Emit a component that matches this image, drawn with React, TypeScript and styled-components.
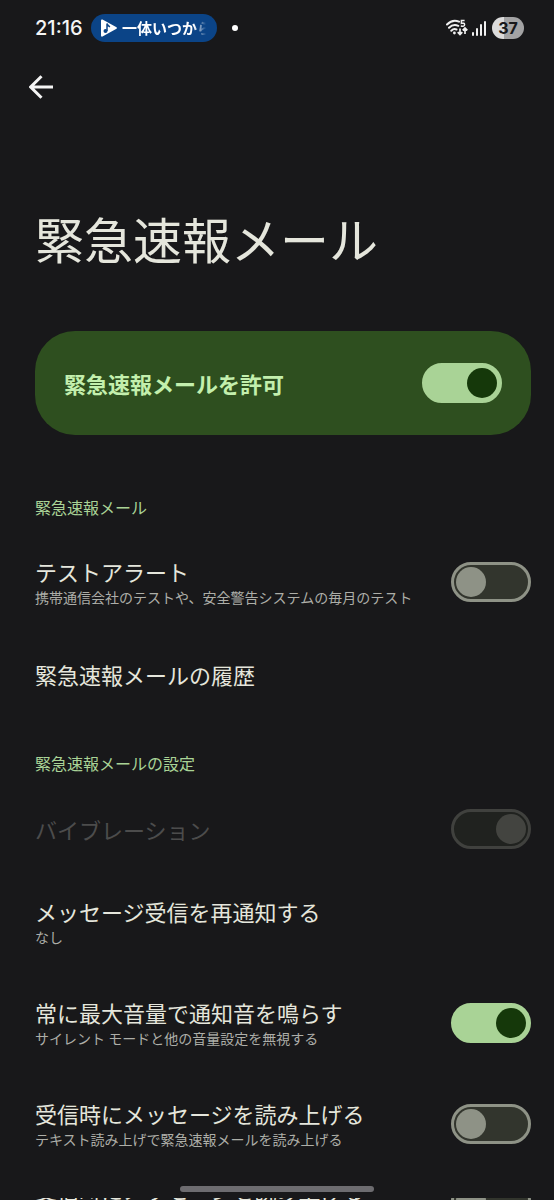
import React, { useState } from 'react';
import styled, { createGlobalStyle, css } from 'styled-components';

const GlobalStyle = createGlobalStyle`
  * { box-sizing: border-box; }
  html, body { height: 100%; }
  body {
    margin: 0;
    background: #18181a;
    color: #e5e6dc;
    font-family: "Noto Sans CJK JP", sans-serif;
    overflow: hidden;
  }
  #root { height: 100%; }
`;

const Screen = styled.div`
  height: 100%;
  overflow: hidden;
  background: #18181a;
`;

const StatusBar = styled.header`
  display: flex;
  align-items: center;
  height: 56px;
  padding: 0 30px 0 35px;
`;

const Clock = styled.time`
  width: 56px;
  font: 500 20px/28px Inter, Roboto, sans-serif;
  color: #f4f4f4;
`;

const MediaChip = styled.button`
  display: flex;
  align-items: center;
  gap: 4px;
  width: 126px;
  height: 28px;
  padding: 0 10px 0 9px;
  border: 0;
  border-radius: 14px;
  background: #0b4487;
  color: #fff;
`;

const ChipText = styled.span`
  flex: 1;
  overflow: hidden;
  white-space: nowrap;
  text-align: left;
  font: 700 15px/22px "Noto Sans CJK JP", sans-serif;
  mask-image: linear-gradient(to right, #000 72px, transparent 84px);
`;

const Dot = styled.span`
  width: 6px;
  height: 6px;
  margin-left: 15px;
  border-radius: 50%;
  background: #fff;
`;

const StatusIcons = styled.div`
  display: flex;
  align-items: center;
  gap: 4px;
  margin-left: auto;
`;

const Battery = styled.span`
  width: 32px;
  height: 22px;
  border-radius: 11px;
  background: linear-gradient(to right, #dcdcdc 37%, #a3a3a4 37%);
  color: #18181a;
  text-align: center;
  font: 700 16px/22px Inter, Roboto, sans-serif;
`;

const Toolbar = styled.nav`
  display: flex;
  align-items: center;
  height: 62px;
  padding: 0 23px;
`;

const BackButton = styled.button`
  display: flex;
  align-items: center;
  justify-content: center;
  width: 36px;
  height: 36px;
  padding: 0;
  border: 0;
  background: none;
  color: #f4f4f4;
`;

const Content = styled.main`
  padding: 0 23px 0 35px;
`;

const PageTitle = styled.h1`
  margin: 84px 0 57px;
  font-size: 49px;
  line-height: 72px;
  font-weight: 400;
`;

const MainCard = styled.label`
  display: flex;
  align-items: center;
  justify-content: space-between;
  min-height: 104px;
  padding: 0 29px;
  border-radius: 40px;
  background: #2e4f1f;
  color: #c3efad;
  font-size: 22px;
  line-height: 32px;
  font-weight: 700;
`;

const SectionTitle = styled.h2<{ $first?: boolean }>`
  margin: ${p => (p.$first ? '60px' : '35px')} 0 12px;
  color: #a9d396;
  font-size: 16px;
  line-height: 24px;
  font-weight: 400;
`;

type RowSize = 'regular' | 'compact' | 'tight';

const rowHeights: Record<RowSize, string> = {
  regular: '101px',
  compact: '84px',
  tight: '52px',
};

const rowLayout = css<{ $size?: RowSize }>`
  display: flex;
  align-items: center;
  justify-content: space-between;
  width: 100%;
  min-height: ${p => rowHeights[p.$size ?? 'regular']};
  color: #e5e6dc;
`;

const SwitchRow = styled.label<{ $size?: RowSize; $disabled?: boolean }>`
  ${rowLayout}
  ${p => p.$disabled && css`color: #4c4c4c;`}
`;

const LinkRow = styled.button<{ $size?: RowSize }>`
  ${rowLayout}
  padding: 0;
  border: 0;
  background: none;
  text-align: left;
  font-family: inherit;
`;

const RowText = styled.span`
  display: flex;
  flex-direction: column;
`;

const RowTitle = styled.span`
  font-size: 22px;
  line-height: 30px;
`;

const RowSummary = styled.span`
  color: #adaea8;
  font-size: 14px;
  line-height: 22px;
`;

const Switch = styled.input.attrs({ type: 'checkbox', role: 'switch' })`
  appearance: none;
  display: flex;
  align-items: center;
  flex: none;
  width: 80px;
  height: 40px;
  margin: 0;
  padding: 0 2px;
  border: 3px solid #8e9286;
  border-radius: 20px;
  background: #32352d;

  &::before {
    content: '';
    width: 30px;
    height: 30px;
    border-radius: 50%;
    background: #8e9286;
  }
  &:checked {
    justify-content: flex-end;
    border-color: #a9d396;
    background: #a9d396;
  }
  &:checked::before { background: #15380a; }
  &:disabled {
    border-color: #40413e;
    background: #20221f;
  }
  &:disabled::before { background: #434440; }
`;

const NavBar = styled.footer`
  position: fixed;
  right: 0;
  bottom: 2px;
  left: 0;
  display: flex;
  align-items: flex-end;
  justify-content: center;
  height: 26px;
  padding-bottom: 6px;
  background: #18181a;
`;

const NavHandle = styled.div`
  width: 194px;
  height: 6px;
  border-radius: 3px;
  background: #6d6c70;
`;

function PlayIcon() {
  return (
    <svg width="18" height="20" viewBox="0 0 18 20" aria-hidden="true">
      <path d="M2.5 1.5 16.5 9.2Q17.5 10 16.5 10.8L2.5 18.5Q1 19 1 17.5V2.5Q1 1 2.5 1.5Z" fill="#fff" />
      <path d="M7 5.500v7.500M7 5.500q.4 2.200 3 3.400" fill="none" stroke="#0b4487" strokeWidth="1.500" />
      <circle cx="5.500" cy="13" r="2" fill="#0b4487" />
    </svg>
  );
}

function WifiIcon() {
  return (
    <svg width="22" height="18" viewBox="0 0 22 18" fill="none" stroke="#f0f0f0" aria-hidden="true">
      <path d="M1 5.500Q6.500-.2 13 2.600M3 8.700Q7.200 4.600 12.300 6.800M5.300 11.700Q7.800 9.200 10.500 10.500" strokeWidth="2" strokeLinecap="round" />
      <circle cx="8.400" cy="14" r="1.400" fill="#f0f0f0" stroke="none" />
      <path d="M18.600 1.500H15.400V4.400Q18.600 3.500 18.600 5.700 18.400 7.800 14.800 7.100" strokeWidth="1.500" />
      <path d="M14 9.500v6M11.700 13.200l2.300 2.400 2.300-2.400M19 15v-6M16.700 11.400 19 9l2.300 2.400" strokeWidth="1.700" />
    </svg>
  );
}

function SignalIcon() {
  return (
    <svg width="16" height="16" viewBox="0 0 16 16" fill="#f0f0f0" aria-hidden="true">
      <rect x="0" y="12" width="2" height="4" rx="1" />
      <rect x="4" y="8" width="2" height="8" rx="1" />
      <rect x="8" y="4" width="2" height="12" rx="1" />
      <rect x="12" y="1" width="2" height="15" rx="1" />
    </svg>
  );
}

type ToggleProps = {
  title: string;
  summary?: string;
  initial?: boolean;
  disabled?: boolean;
  size?: RowSize;
};

function ToggleRow({ title, summary, initial = false, disabled, size }: ToggleProps) {
  const [on, setOn] = useState(initial);
  return (
    <SwitchRow $size={size} $disabled={disabled}>
      <RowText>
        <RowTitle>{title}</RowTitle>
        {summary && <RowSummary>{summary}</RowSummary>}
      </RowText>
      <Switch checked={on} disabled={disabled} onChange={e => setOn(e.target.checked)} />
    </SwitchRow>
  );
}

export default function App() {
  const [allowed, setAllowed] = useState(true);
  return (
    <Screen>
      <GlobalStyle />
      <StatusBar>
        <Clock>21:16</Clock>
        <MediaChip>
          <PlayIcon />
          <ChipText>一体いつから</ChipText>
        </MediaChip>
        <Dot />
        <StatusIcons>
          <WifiIcon />
          <SignalIcon />
          <Battery>37</Battery>
        </StatusIcons>
      </StatusBar>
      <Toolbar>
        <BackButton aria-label="戻る">
          <svg width="24" height="24" viewBox="0 0 24 24" fill="none" stroke="currentColor" strokeWidth="3" aria-hidden="true">
            <path d="M24 12H2M12.500 1.200 1.700 12l10.800 10.800" />
          </svg>
        </BackButton>
      </Toolbar>
      <Content>
        <PageTitle>緊急速報メール</PageTitle>
        <MainCard>
          緊急速報メールを許可
          <Switch checked={allowed} onChange={e => setAllowed(e.target.checked)} />
        </MainCard>
        <SectionTitle $first>緊急速報メール</SectionTitle>
        <ToggleRow title="テストアラート" summary="携帯通信会社のテストや、安全警告システムの毎月のテスト" />
        <LinkRow $size="compact">
          <RowTitle>緊急速報メールの履歴</RowTitle>
        </LinkRow>
        <SectionTitle>緊急速報メールの設定</SectionTitle>
        <ToggleRow title="バイブレーション" size="compact" initial disabled />
        <LinkRow>
          <RowText>
            <RowTitle>メッセージ受信を再通知する</RowTitle>
            <RowSummary>なし</RowSummary>
          </RowText>
        </LinkRow>
        <ToggleRow title="常に最大音量で通知音を鳴らす" summary="サイレント モードと他の音量設定を無視する" initial />
        <ToggleRow title="受信時にメッセージを読み上げる" summary="テキスト読み上げで緊急速報メールを読み上げる" />
        <ToggleRow
          title="受信時にメッセージを読み上げる"
          summary="テキスト読み上げで緊急速報メールを読み上げる"
          size="tight"
        />
      </Content>
      <NavBar>
        <NavHandle />
      </NavBar>
    </Screen>
  );
}
